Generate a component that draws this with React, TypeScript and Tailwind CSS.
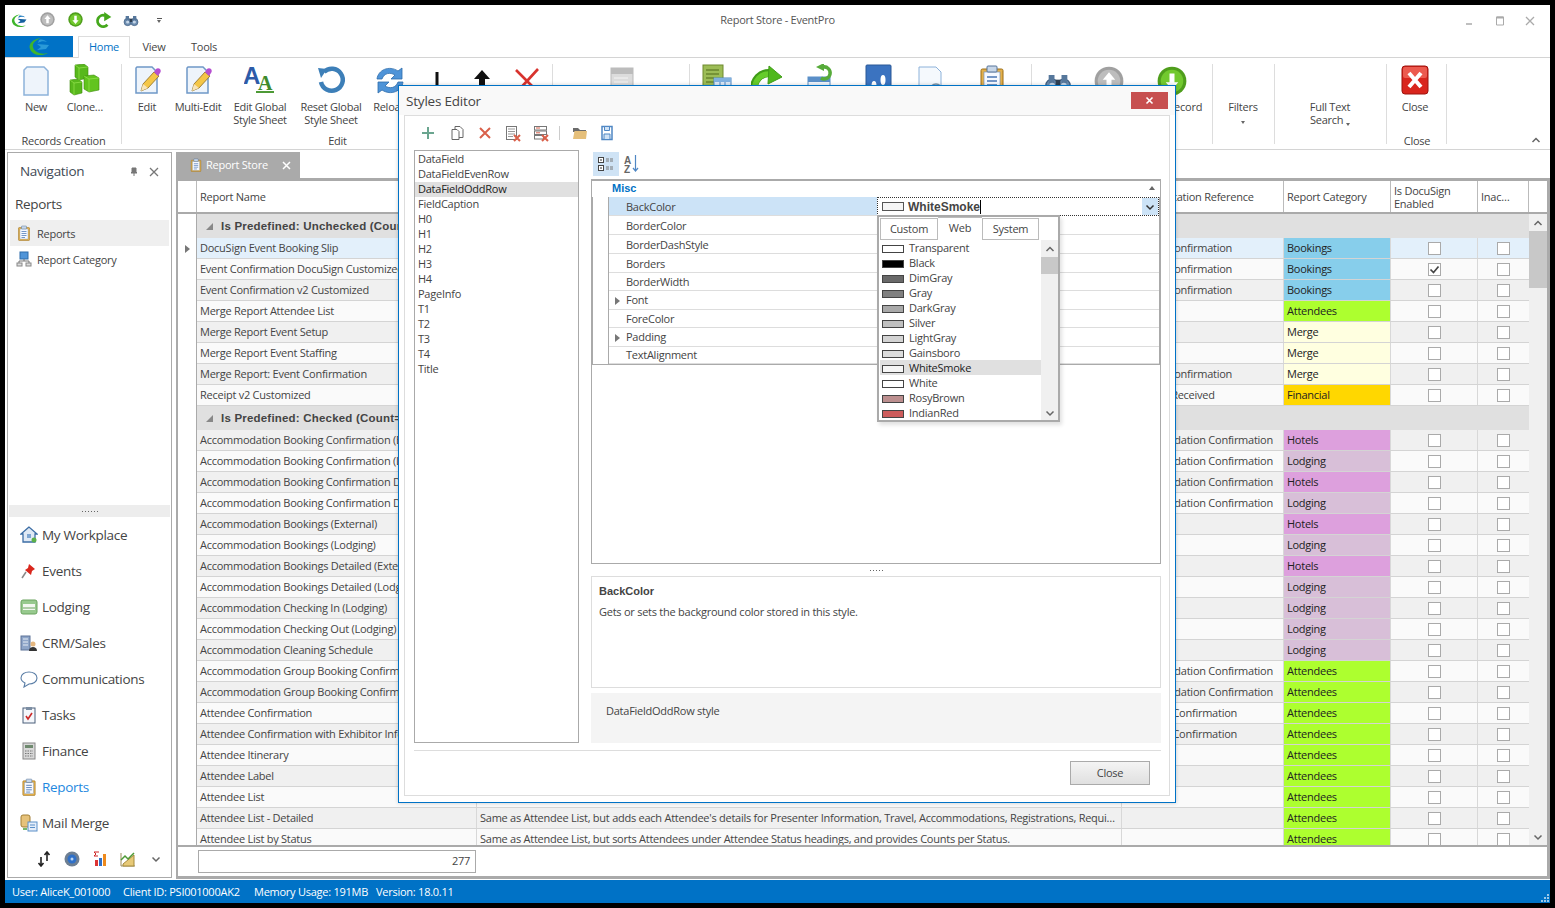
import React from "react";

type SvgP = { s?: number; className?: string };
const V = ({ s = 32, vb = 32, children }: { s?: number; vb?: number; children: React.ReactNode }) => (
  <svg width={s} height={s} viewBox={`0 0 ${vb} ${vb}`} className="block shrink-0">{children}</svg>
);

const Swirl = ({ s = 18, light = false }: SvgP & { light?: boolean }) => (
  <V s={s} vb={24}>
    <path d="M14 3C6 4 1 9 3 14c2 6 11 8 18 4-7 2-14-1-15-6-1-4 3-7 8-9z" fill="#3fb52c" />
    <path d="M10 9l12 1-3 4-9 1 4-3z" fill={light ? "#2a9ad8" : "#14609f"} />
    <path d="M12 5c3-1 6 0 8 2-3-1-6-1-9 1z" fill={light ? "#2a9ad8" : "#1f7cc0"} />
  </V>
);
const CircleArrow = ({ s = 18, up = false, green = false }: SvgP & { up?: boolean; green?: boolean }) => (
  <V s={s} vb={24}>
    <circle cx="12" cy="12" r="11.500" fill={green ? "#4f9e1c" : "#a0a0a0"} />
    <circle cx="12" cy="12" r="9" fill={green ? "#72c92e" : "#bdbdbd"} />
    <path d={up ? "M12 5l5 6h-3v7h-4v-7H7z" : "M12 19l5-6h-3V6h-4v7H7z"} fill="#fff" />
  </V>
);
const TitleRefresh = ({ s = 18 }: SvgP) => (
  <V s={s} vb={24}>
    <path d="M17.500 18A8 8 0 1 1 14 5" fill="none" stroke="#45a81c" strokeWidth="4" />
    <path d="M13 0l10 7-10 6z" fill="#45a81c" />
  </V>
);
const GreenTurn = () => (
  <V>
    <path d="M2 30C2 15 10 8 20 9" fill="none" stroke="#3f9c17" strokeWidth="8" />
    <path d="M3 30C3 15 10 9 20 10" fill="none" stroke="#66cc2a" strokeWidth="5.500" />
    <path d="M18 2l13 11-14 7z" fill="#4fb81c" stroke="#3f9c17" />
  </V>
);
const Binoculars = ({ s = 18 }: SvgP) => (
  <V s={s} vb={24}>
    <circle cx="7" cy="15" r="5.500" fill="#6d8db0" stroke="#3e5c7e" />
    <circle cx="17" cy="15" r="5.500" fill="#6d8db0" stroke="#3e5c7e" />
    <rect x="4" y="6" width="5" height="7" fill="#56779b" />
    <rect x="15" y="6" width="5" height="7" fill="#56779b" />
    <rect x="10" y="10" width="4" height="5" fill="#2f3f52" />
    <circle cx="7" cy="15" r="2.400" fill="#c5d6e8" />
    <circle cx="17" cy="15" r="2.400" fill="#c5d6e8" />
  </V>
);
const PageIcon = () => (
  <V>
    <path d="M7 3h17l4 4v24H4V6z" fill="#eef4fb" stroke="#8db2da" strokeWidth="1.500" />
  </V>
);
const Cubes = () => (
  <V>
    <path d="M6 1l9-1 4 3v11l-9 2-4-3z" fill="#58b81c" stroke="#3d8a0c" strokeWidth=".6" />
    <path d="M1 16l8-1 4 3v11l-8 2-4-3z" fill="#58b81c" stroke="#3d8a0c" strokeWidth=".6" />
    <path d="M15 12l10-1 5 3v12l-10 2-5-3z" fill="#62c41f" stroke="#3d8a0c" strokeWidth=".6" />
    <path d="M15 12l5 3 10-1M20 15v13M1 16l4 3 8-1M5 19v12M6 1l4 3 9-1M10 4v12" fill="none" stroke="#8fe04a" strokeWidth=".8" />
  </V>
);
const EditDoc = () => (
  <V>
    <path d="M6 3h15l5 5v21H5V4z" fill="#eef4fb" stroke="#6f98c8" strokeWidth="1.500" />
    <path d="M10 27l2-7L23 8l5 4-11 12z" fill="#f4c647" stroke="#8a6a20" strokeWidth=".8" />
    <path d="M23 8l2-3c1-1 3-1 4 0s1 3 0 4l-2 3z" fill="#b64fd0" />
    <path d="M10 27l2-7 5 4z" fill="#f7e4b8" />
  </V>
);
const AaIcon = () => (
  <svg width="32" height="32" viewBox="0 0 32 32" className="block">
    <text x="-1" y="20" fontFamily="'Liberation Sans', sans-serif" fontSize="24" fontWeight="700" fill="#2d5ba8">A</text>
    <text x="14" y="26" fontFamily="'Liberation Serif', serif" fontSize="20" fontWeight="700" fill="#3e8a2c">A</text>
    <rect x="12" y="27" width="18" height="2" fill="#4d9a36" />
  </svg>
);
const ResetIcon = () => (
  <V>
    <path d="M9 8a11 11 0 1 1-3 10" fill="none" stroke="#3d7fb8" strokeWidth="4.500" />
    <path d="M3 4l9 1-6 9z" fill="#3d7fb8" />
  </V>
);
const ReloadIcon = () => (
  <V>
    <path d="M3 15C4 6 15 1 24 7l4-3v11H17l4-4c-5-3-11-2-13 4z" fill="#4f94d8" stroke="#2d6cab" strokeWidth=".8" />
    <path d="M29 18c-1 9-12 14-21 8l-4 3V18h11l-4 4c5 3 11 2 13-4z" fill="#4f94d8" stroke="#2d6cab" strokeWidth=".8" />
  </V>
);
const BlackDown = () => (
  <V>
    <path d="M16 8v16" stroke="#111" strokeWidth="3" />
    <path d="M8 24h16v3H8z" fill="#111" />
  </V>
);
const BlackUp = () => (
  <V>
    <path d="M16 6l8 9h-5v13h-6V15H8z" fill="#111" />
  </V>
);
const RedX = () => (
  <V>
    <path d="M5 6l22 22M27 5L6 28" stroke="#d8332e" strokeWidth="2.600" />
  </V>
);
const GrayDoc = () => (
  <V>
    <rect x="5" y="4" width="22" height="24" fill="#dcdcdc" stroke="#bbb" />
    <rect x="5" y="4" width="22" height="6" fill="#bcbcbc" />
    <path d="M8 14h14M8 18h14M8 22h10" stroke="#f5f5f5" />
  </V>
);
const GreenSheet = () => (
  <V>
    <rect x="3" y="1" width="20" height="26" fill="#9cbc56" stroke="#6e8a2e" />
    <path d="M6 6h13M6 10h13M6 14h8M6 18h8" stroke="#4e6a18" />
    <rect x="14" y="14" width="17" height="16" fill="#dce9f7" stroke="#4f87c4" />
    <rect x="14" y="14" width="17" height="4" fill="#7fb0e0" />
    <path d="M20 18v12M25 18v12M14 24h17" stroke="#4f87c4" />
  </V>
);
const BlueWin = () => (
  <V>
    <rect x="2" y="13" width="22" height="18" fill="#eef4fb" stroke="#5a8fc8" />
    <rect x="2" y="13" width="22" height="5" fill="#5a8fc8" />
    <path d="M15 14a6 6 0 1 0 2-11" fill="none" stroke="#57ab3a" strokeWidth="3.500" />
    <path d="M10 3l8-4v8z" fill="#57ab3a" />
  </V>
);
const BlueBook = () => (
  <V>
    <rect x="4" y="1" width="25" height="30" rx="1" fill="#3b73c0" stroke="#2b5896" />
    <ellipse cx="12" cy="22" rx="2.500" ry="5" fill="#fff" />
    <ellipse cx="21" cy="16" rx="2.500" ry="5" fill="#fff" />
  </V>
);
const MagDoc = () => (
  <V>
    <path d="M5 3h17l5 5v22H5z" fill="#f5f9fd" stroke="#8db2da" />
    <circle cx="22" cy="26" r="6" fill="#e9f1f7" stroke="#7a93a8" strokeWidth="1.500" />
  </V>
);
const ClipBoard = ({ s = 32 }: SvgP) => (
  <V s={s}>
    <rect x="5" y="5" width="22" height="26" rx="1.500" fill="#e3b04b" stroke="#9b6c17" />
    <rect x="8" y="8" width="16" height="20" fill="#f6f9ff" stroke="#7a93b8" strokeWidth=".7" />
    <rect x="11" y="2" width="10" height="6" rx="1" fill="#c7d6e8" stroke="#56749a" />
    <path d="M11 13h10M11 17h10M11 21h10M11 25h7" stroke="#4976b4" strokeWidth="1.500" />
  </V>
);
const BigX = () => (
  <V>
    <rect x="3" y="2" width="26" height="28" rx="3" fill="#d9251d" stroke="#9c140e" />
    <rect x="4" y="3" width="24" height="11" rx="2" fill="#ec5a4f" />
    <path d="M10 9l12 14M22 9L10 23" stroke="#fff" strokeWidth="4" />
  </V>
);
const Plus = () => <V s={16} vb={16}><path d="M8 2v12M2 8h12" stroke="#6aa58f" strokeWidth="2" /></V>;
const CopyIc = () => (
  <V s={16} vb={16}>
    <path d="M6 1.500h5l3 3v8H6z" fill="#fff" stroke="#666" />
    <path d="M3 4.500h5l2 2v8H3z" fill="#fff" stroke="#666" />
  </V>
);
const XIc = () => <V s={16} vb={16}><path d="M3 3l10 10M13 3L3 13" stroke="#d9604a" strokeWidth="2" /></V>;
const ListX = () => (
  <V s={17} vb={17}>
    <rect x="1.500" y="1.500" width="10" height="13" fill="#fff" stroke="#777" />
    <path d="M3 4h7M3 6.500h7M3 9h7M3 11.500h5" stroke="#999" />
    <path d="M9 10l6 6M15 10l-6 6" stroke="#d9604a" strokeWidth="2" />
  </V>
);
const RowX = () => (
  <V s={17} vb={17}>
    <rect x="1.500" y="1.500" width="12" height="3.500" fill="#fff" stroke="#777" />
    <rect x="1.500" y="6" width="12" height="3.500" fill="#fff" stroke="#777" />
    <rect x="1.500" y="10.500" width="9" height="3.500" fill="#fff" stroke="#777" />
    <path d="M3 3h4M3 7.800h4" stroke="#d9604a" />
    <path d="M9 10l6 6M15 10l-6 6" stroke="#d9604a" strokeWidth="2" />
  </V>
);
const Folder = () => (
  <V s={16} vb={16}>
    <path d="M1 3h5l2 2h6v2H1z" fill="#6b6b6b" />
    <path d="M1 14l1.500-8H15l-1 8z" fill="#e5bf7a" />
  </V>
);
const SaveIc = () => (
  <V s={16} vb={16}>
    <path d="M3 1.500h10v13H3z" fill="#fff" stroke="#4f87c4" strokeWidth="1.500" />
    <path d="M5.500 1.500h5v4h-5zM5 9h6v5.500H5z" fill="#cfe2f5" stroke="#4f87c4" />
  </V>
);
const ChevUp = ({ c = "#666" }: { c?: string }) => (
  <V s={10} vb={10}><path d="M1.500 7L5 3.500 8.500 7" fill="none" stroke={c} strokeWidth="1.500" /></V>
);
const ChevDown = ({ c = "#666" }: { c?: string }) => (
  <V s={10} vb={10}><path d="M1.500 3.500L5 7l3.500-3.500" fill="none" stroke={c} strokeWidth="1.500" /></V>
);
const Tri = () => <span className="block w-0 h-0 border-y-[4px] border-y-transparent border-l-[5px] border-l-[#777]" />;
const Drop = () => <span className="inline-block w-0 h-0 border-x-[2.5px] border-x-transparent border-t-[3px] border-t-[#666]" />;

const Btn = ({ w, label, icon }: { w: string; label?: React.ReactNode; icon?: React.ReactNode }) => (
  <div className={`${w} flex flex-col items-center shrink-0`}>
    <div className="h-[38px] flex items-end justify-center">{icon}</div>
    <div className="mt-[4px] text-center leading-[13px] whitespace-nowrap">{label}</div>
  </div>
);

const Group = ({ w, label, children }: { w: string; label?: string; children: React.ReactNode }) => (
  <div className={`${w} relative shrink-0 flex flex-col`}>
    <div className="flex flex-1">{children}</div>
    <div className="h-[20px] pt-[3px] text-center leading-[18px]">{label}</div>
    <div className="absolute right-0 top-[6px] bottom-[5px] w-px bg-[#ddd]" />
  </div>
);

const Ribbon = () => (
  <div className="h-[92px] flex items-stretch border-b border-[#d4d4d4] text-[#444] relative shrink-0">
    <Group w="w-[117px]" label="Records Creation">
      <div className="w-[3px]" />
      <Btn w="w-[56px]" icon={<PageIcon />} label="New" />
      <Btn w="w-[42px]" icon={<Cubes />} label="Clone…" />
    </Group>
    <Group w="w-[431px]" label="Edit">
      <Btn w="w-[50px]" icon={<EditDoc />} label="Edit" />
      <Btn w="w-[52px]" icon={<EditDoc />} label="Multi-Edit" />
      <Btn w="w-[72px]" icon={<AaIcon />} label={<>Edit Global<br />Style Sheet</>} />
      <Btn w="w-[70px]" icon={<ResetIcon />} label={<>Reset Global<br />Style Sheet</>} />
      <Btn w="w-[48px]" icon={<ReloadIcon />} label="Reload" />
      <Btn w="w-[46px]" icon={<BlackDown />} />
      <Btn w="w-[44px]" icon={<BlackUp />} />
      <Btn w="w-[46px]" icon={<RedX />} />
    </Group>
    <Group w="w-[137px]">
      <Btn w="w-[137px]" icon={<GrayDoc />} />
    </Group>
    <Group w="w-[342px]">
      <Btn w="w-[52px]" icon={<GreenSheet />} />
      <Btn w="w-[50px]" icon={<GreenTurn />} />
      <Btn w="w-[60px]" icon={<BlueWin />} />
      <Btn w="w-[52px]" icon={<BlueBook />} />
      <Btn w="w-[52px]" icon={<MagDoc />} />
      <Btn w="w-[72px]" icon={<ClipBoard />} />
    </Group>
    <Group w="w-[181px]">
      <Btn w="w-[52px]" icon={<Binoculars s={28} />} />
      <Btn w="w-[50px]" icon={<CircleArrow s={30} up />} />
      <Btn w="w-[76px]" icon={<CircleArrow s={30} green />} label="Next Record" />
    </Group>
    <Group w="w-[62px]">
      <Btn w="w-[60px]" label={<>Filters<br /><Drop /></>} />
    </Group>
    <Group w="w-[112px]">
      <Btn w="w-[110px]" label={<>Full Text<br />Search <span className="align-middle"><Drop /></span></>} />
    </Group>
    <Group w="w-[60px]" label="Close">
      <Btn w="w-[56px]" icon={<BigX />} label="Close" />
    </Group>
    <div className="flex-1 flex items-end justify-end pr-[9px] pb-[4px]"><ChevUp /></div>
  </div>
);

const cats: Record<string, string> = {
  Bookings: "bg-[#87ceeb]",
  Attendees: "bg-[#adff2f]",
  Merge: "bg-[#ffffe0]",
  Financial: "bg-[#ffd700]",
  Hotels: "bg-[#dda0dd]",
  Lodging: "bg-[#d8bfd8]",
};
const EC = "Booking Confirmation";
const AC = "Accommodation Confirmation";
const AT = "Attendee Confirmation";
type R = { n: string; d?: string; r?: string; c: string; chk?: boolean; sel?: boolean };
const groupA: R[] = [
  { n: "DocuSign Event Booking Slip", r: EC, c: "Bookings", sel: true },
  { n: "Event Confirmation DocuSign Customized", r: EC, c: "Bookings", chk: true },
  { n: "Event Confirmation v2 Customized", r: EC, c: "Bookings" },
  { n: "Merge Report Attendee List", c: "Attendees" },
  { n: "Merge Report Event Setup", c: "Merge" },
  { n: "Merge Report Event Staffing", c: "Merge" },
  { n: "Merge Report: Event Confirmation", r: EC, c: "Merge" },
  { n: "Receipt v2 Customized", r: "Payment Received", c: "Financial" },
];
const groupB: R[] = [
  { n: "Accommodation Booking Confirmation (External)", r: AC, c: "Hotels" },
  { n: "Accommodation Booking Confirmation (Lodging)", r: AC, c: "Lodging" },
  { n: "Accommodation Booking Confirmation Detailed (External)", r: AC, c: "Hotels" },
  { n: "Accommodation Booking Confirmation Detailed (Lodging)", r: AC, c: "Lodging" },
  { n: "Accommodation Bookings (External)", c: "Hotels" },
  { n: "Accommodation Bookings (Lodging)", c: "Lodging" },
  { n: "Accommodation Bookings Detailed (External)", c: "Hotels" },
  { n: "Accommodation Bookings Detailed (Lodging)", c: "Lodging" },
  { n: "Accommodation Checking In (Lodging)", c: "Lodging" },
  { n: "Accommodation Checking Out (Lodging)", c: "Lodging" },
  { n: "Accommodation Cleaning Schedule", c: "Lodging" },
  { n: "Accommodation Group Booking Confirmation (External)", r: AC, c: "Attendees" },
  { n: "Accommodation Group Booking Confirmation (Lodging)", r: AC, c: "Attendees" },
  { n: "Attendee Confirmation", r: AT, c: "Attendees" },
  { n: "Attendee Confirmation with Exhibitor Information", r: AT, c: "Attendees" },
  { n: "Attendee Itinerary", c: "Attendees" },
  { n: "Attendee Label", c: "Attendees" },
  { n: "Attendee List", c: "Attendees" },
  { n: "Attendee List - Detailed", c: "Attendees", d: "Same as Attendee List, but adds each Attendee's details for Presenter Information, Travel, Accommodations, Registrations, Requi…" },
  { n: "Attendee List by Status", c: "Attendees", d: "Same as Attendee List, but sorts Attendees under Attendee Status headings, and provides Counts per Status." },
];

const Check = ({ on = false }: { on?: boolean }) => (
  <span className="w-[13px] h-[13px] border border-[#aaa] bg-white flex items-center justify-center">
    {on && <V s={11} vb={11}><path d="M1.500 5.500l3 3 5-6" fill="none" stroke="#444" strokeWidth="1.700" /></V>}
  </span>
);

const Cell = ({ w, children, className = "" }: { w: string; children?: React.ReactNode; className?: string }) => (
  <div className={`${w} shrink-0 h-full border-r border-[#d8d8d8] pl-[3px] pr-[2px] flex items-center overflow-hidden whitespace-nowrap ${className}`}>{children}</div>
);

const Row = ({ r, i }: { r: R; i: number }) => {
  const bg = r.sel ? "bg-[#e3f0fb]" : i % 2 === 1 ? "bg-[#fafafa]" : "bg-[#f0f0f0]";
  return (
    <div className="h-[21px] shrink-0 flex">
      <div className="w-[19px] shrink-0 bg-white border-r border-[#aaa] flex items-center justify-center">{r.sel && <Tri />}</div>
      <div className={`flex flex-1 border-b border-[#d4d4d4] ${bg}`}>
        <Cell w="w-[280px]">{r.n}</Cell>
        <Cell w="w-[645px]">{r.d}</Cell>
        <Cell w="w-[162px]">{r.r}</Cell>
        <Cell w="w-[107px]" className={`text-[#222] ${cats[r.c]}`}>{r.c}</Cell>
        <Cell w="w-[87px]" className="justify-center"><Check on={r.chk} /></Cell>
        <Cell w="w-[51px]" className="justify-center !border-r-0 !pr-[4px]"><Check /></Cell>
      </div>
    </div>
  );
};

const GroupRow = ({ t }: { t: string }) => (
  <div className="h-[24px] shrink-0 flex">
    <div className="w-[19px] shrink-0 bg-white border-r border-[#aaa]" />
    <div className="flex-1 bg-[#e0e0e0] flex items-center pl-[9px] pt-px font-bold text-[#444] font-['Liberation_Sans','Noto_Sans',sans-serif] text-[11.5px] tracking-[0.2px] overflow-hidden whitespace-nowrap">
      <span className="w-0 h-0 mr-[8px] border-t-[7px] border-t-transparent border-r-[7px] border-r-[#888]" />
      {t}
    </div>
  </div>
);

const Grid = () => {
  const h = "h-full border-r border-[#bbb] px-[3px] flex items-center shrink-0 leading-[13px]";
  return (
    <div className="flex-1 min-h-0 flex flex-col overflow-hidden">
      <div className="h-[33px] shrink-0 flex border-b-2 border-[#aaa] bg-white">
        <div className={`${h} w-[19px]`} />
        <div className={`${h} w-[280px]`}>Report Name</div>
        <div className={`${h} w-[645px]`}>Description</div>
        <div className={`${h} w-[162px]`}>Documentation Reference</div>
        <div className={`${h} w-[107px]`}>Report Category</div>
        <div className={`${h} w-[87px]`}>Is DocuSign<br />Enabled</div>
        <div className={`${h} w-[51px]`}>Inac…</div>
      </div>
      <div className="flex-1 min-h-0 flex">
        <div className="flex-1 min-w-0 flex flex-col overflow-hidden">
          <GroupRow t="Is Predefined: Unchecked (Count=8)" />
          {groupA.map((r, i) => <Row key={r.n} r={r} i={i} />)}
          <GroupRow t="Is Predefined: Checked (Count=269)" />
          {groupB.map((r, i) => <Row key={r.n} r={r} i={i} />)}
        </div>
        <div className="w-[18px] shrink-0 bg-[#f0f0f0] flex flex-col items-center">
          <div className="h-[17px] flex items-center"><ChevUp /></div>
          <div className="w-full h-[57px] bg-[#c8c8c8]" />
          <div className="flex-1" />
          <div className="h-[17px] flex items-center"><ChevDown /></div>
        </div>
      </div>
    </div>
  );
};

const navItems: [string, React.ReactNode, boolean?][] = [
  ["My Workplace", <V s={18} vb={18}><path d="M9 1L1 8h2v8h12V8h2z" fill="#dfe9f5" stroke="#3d6ea5" strokeWidth="1.300" /><rect x="7" y="8" width="4" height="4" fill="#7fa6d2" /><circle cx="14" cy="14" r="2.500" fill="#5bb04a" /></V>],
  ["Events", <V s={18} vb={18}><path d="M9 2l6 5-3 2-1 4-6-5 3-2z" fill="#d9271d" /><path d="M6 10l-4 6" stroke="#888" strokeWidth="1.500" /></V>],
  ["Lodging", <V s={18} vb={18}><rect x="1" y="2" width="16" height="14" rx="2" fill="#97c98e" stroke="#6aa35f" /><rect x="3" y="6" width="12" height="6" fill="#f2f7f0" /><path d="M3 10h12" stroke="#6aa35f" /></V>],
  ["CRM/Sales", <V s={18} vb={18}><rect x="1" y="2" width="9" height="14" fill="#8ea5c8" stroke="#5c7398" /><path d="M3 5h5M3 8h5M3 11h5" stroke="#e5ecf5" /><circle cx="13" cy="10" r="2.500" fill="#e5b77f" /><path d="M9 17c0-3 2-4 4-4s4 1 4 4z" fill="#333" /></V>],
  ["Communications", <V s={18} vb={18}><path d="M9 2c4 0 8 2 8 6s-4 6-8 6l-5 3 1-4c-2-1-4-3-4-5 0-4 4-6 8-6z" fill="#fff" stroke="#5b7ea6" strokeWidth="1.100" /></V>],
  ["Tasks", <V s={18} vb={18}><rect x="3" y="2" width="12" height="15" fill="#f4f7fb" stroke="#4a5f7a" /><rect x="6" y="1" width="6" height="3" fill="#7c8ea3" /><path d="M6 10l2 3 4-6" fill="none" stroke="#cc2a2a" strokeWidth="1.600" /></V>],
  ["Finance", <V s={18} vb={18}><rect x="3" y="1" width="12" height="16" fill="#d8d8d8" stroke="#888" /><rect x="5" y="3" width="8" height="3" fill="#6f8a6f" /><path d="M5 9h8M5 11.500h8M5 14h8" stroke="#777" strokeDasharray="1.500 1" /></V>],
  ["Reports", <ClipBoard s={18} />, true],
  ["Mail Merge", <V s={18} vb={18}><rect x="1" y="1" width="9" height="12" rx="2" fill="#e6c27a" stroke="#a37f35" /><rect x="8" y="8" width="9" height="9" fill="#e5eefa" stroke="#5a8fc8" /><path d="M10 11h5M10 13.500h5" stroke="#5a8fc8" /><path d="M3 15h4" stroke="#49a038" strokeWidth="1.500" /></V>],
];

const Nav = () => (
  <div className="w-[165px] shrink-0 border border-[#aaa] flex flex-col text-[#444]">
    <div className="h-[35px] shrink-0 flex items-center pl-[12px] pr-[12px] pt-[2px] text-[13.5px] tracking-[-0.3px] text-[#3f4a55]">
      <span className="flex-1">Navigation</span>
      <V s={10} vb={10}><path d="M3 1h4v4l1 1H2l1-1zM5 6v3" fill="#777" stroke="#777" /></V>
      <span className="w-[10px]" />
      <V s={10} vb={10}><path d="M1 1l8 8M9 1L1 9" stroke="#777" strokeWidth="1.300" /></V>
    </div>
    <div className="h-[32px] shrink-0 pl-[7px] flex items-center text-[13.5px] tracking-[-0.3px]">Reports</div>
    <div className="h-[26px] mx-[2px] shrink-0 bg-[#efefef] flex items-center pl-[6px] gap-[5px]">
      <ClipBoard s={16} /> <span className="pt-[2px]">Reports</span>
    </div>
    <div className="h-[26px] mx-[2px] shrink-0 flex items-center pl-[6px] gap-[5px]">
      <V s={16} vb={16}><rect x="4" y="1" width="8" height="7" fill="#4f94d8" stroke="#2d6cab" /><path d="M8 8v2M3 10h10v2M3 10v2" stroke="#777" fill="none" /><rect x="1" y="12" width="5" height="3" fill="#ddd" stroke="#888" /><rect x="10" y="12" width="5" height="3" fill="#ddd" stroke="#888" /></V>
      <span className="pt-[2px]">Report Category</span>
    </div>
    <div className="flex-1" />
    <div className="h-[12px] mx-[1px] shrink-0 bg-[#ededed] flex items-center justify-center gap-[2px]">
      {[0, 1, 2, 3, 4, 5].map((i) => <span key={i} className="w-px h-px bg-[#666] block" />)}
    </div>
    {navItems.map(([t, ic, active]) => (
      <div key={t} className={`h-[36px] shrink-0 flex items-center pl-[11px] gap-[4px] text-[13.5px] tracking-[-0.3px] ${active ? "text-[#1e88e0]" : "text-[#444]"}`}>
        <span className="w-[19px] flex justify-center">{ic}</span>
        <span>{t}</span>
      </div>
    ))}
    <div className="h-[36px] shrink-0 flex items-center pl-[22px]">
      <span className="w-[28px] flex justify-center">
        <V s={16} vb={16}><path d="M5 15V6M2.500 12L5 15l2.500-3M11 1v9M8.500 4L11 1l2.500 3" stroke="#222" strokeWidth="1.600" fill="none" /></V>
      </span>
      <span className="w-[28px] flex justify-center">
        <V s={16} vb={16}><circle cx="8" cy="8" r="7.500" fill="#6e7f92" /><circle cx="8" cy="8" r="4.500" fill="#2f70c8" /><circle cx="8" cy="8" r="1.500" fill="#b9d4f2" /></V>
      </span>
      <span className="w-[28px] flex justify-center">
        <V s={16} vb={16}><rect x="3" y="9" width="3" height="6" fill="#d33" /><rect x="7" y="7" width="3" height="8" fill="#2f70c8" /><rect x="11" y="3" width="3" height="12" fill="#ee8a1d" /><path d="M7 1H2l2 2-2 2h4" stroke="#c22" fill="none" /></V>
      </span>
      <span className="w-[28px] flex justify-center">
        <V s={16} vb={16}><path d="M1 15V2M1 15h14" stroke="#9a8a5a" /><path d="M3 13L14 4v11H3z" fill="#e7c977" stroke="#a58a3c" /><path d="M1 9l4-4 3 3 6-6" stroke="#4d9a36" strokeWidth="1.500" fill="none" /></V>
      </span>
      <span className="w-[27px] flex justify-center"><ChevDown /></span>
    </div>
  </div>
);

const styleNames = ["DataField", "DataFieldEvenRow", "DataFieldOddRow", "FieldCaption", "H0", "H1", "H2", "H3", "H4", "PageInfo", "T1", "T2", "T3", "T4", "Title"];

const props: [string, string, boolean?][] = [
  ["BackColor", "h-[19px]"],
  ["BorderColor", "h-[19px]"],
  ["BorderDashStyle", "h-[19px]"],
  ["Borders", "h-[19px]"],
  ["BorderWidth", "h-[18px]"],
  ["Font", "h-[19px]", true],
  ["ForeColor", "h-[18px]"],
  ["Padding", "h-[19px]", true],
  ["TextAlignment", "h-[17px]"],
];

const PropGrid = () => (
  <div className="h-[385px] shrink-0 border border-t-2 border-[#aaa] flex flex-col bg-white">
    <div className="h-[16px] shrink-0 flex items-center pl-[20px] pr-[5px] pb-[2px] justify-between font-bold text-[#0072c6] font-['Liberation_Sans',sans-serif] tracking-normal">
      <span>Misc</span>
      <span className="w-0 h-0 border-x-[3.5px] border-x-transparent border-b-[4px] border-b-[#666]" />
    </div>
    <div className="flex flex-col border-b border-x border-[#aaa]">
      {props.map(([n, h, exp], i) => (
        <div key={n} className={`${h} shrink-0 flex ml-[15px] border-l border-[#aaa]`}>
          <div className={`w-[268px] shrink-0 flex items-center border-b border-[#ddd] pl-[17px] relative ${i < 5 || i === 6 ? "pt-[2px]" : ""} ${i === 0 ? "bg-[#cce3f7]" : ""}`}>
            {exp && <span className="absolute left-[6px] top-[6px]"><Tri /></span>}
            {n}
          </div>
          {i === 0 ? (
            <div className="flex-1 border border-dotted border-[#333] flex items-center pl-[4px] relative">
              <span className="w-[22px] h-[9px] border border-[#555] bg-[#f5f5f5] mr-[4px]" />
              <span className="font-bold font-['Liberation_Sans',sans-serif] text-[12px] tracking-normal">WhiteSmoke</span>
              <span className="w-px h-[14px] bg-black" />
              <span className="absolute right-0 top-0 bottom-0 w-[16px] bg-[#cce3f7] flex items-center justify-center"><ChevDown c="#333" /></span>
            </div>
          ) : (
            <div className="flex-1 border-b border-l border-[#ddd]" />
          )}
        </div>
      ))}
    </div>
  </div>
);

const colors: [string, string][] = [
  ["Transparent", "bg-white"],
  ["Black", "bg-black"],
  ["DimGray", "bg-[#696969]"],
  ["Gray", "bg-[#808080]"],
  ["DarkGray", "bg-[#a9a9a9]"],
  ["Silver", "bg-[#c0c0c0]"],
  ["LightGray", "bg-[#d3d3d3]"],
  ["Gainsboro", "bg-[#dcdcdc]"],
  ["WhiteSmoke", "bg-[#f5f5f5]"],
  ["White", "bg-white"],
  ["RosyBrown", "bg-[#bc8f8f]"],
  ["IndianRed", "bg-[#cd5c5c]"],
];

const ColorDrop = () => (
  <div className="absolute left-[877px] top-[215px] w-[183px] h-[207px] bg-white border-2 border-[#aaa] shadow-[2px_3px_4px_rgba(0,0,0,0.12)] flex flex-col">
    <div className="h-[24px] shrink-0 flex items-start pl-[1px] relative">
      <div className="w-[58px] h-[22px] mt-[1px] pt-px border border-[#bbb] flex items-center justify-center">Custom</div>
      <div className="w-[44px] h-[24px] pb-[3px] flex items-center justify-center border-t border-[#bbb]">Web</div>
      <div className="w-[57px] h-[22px] mt-[1px] pt-px border border-[#bbb] flex items-center justify-center">System</div>
    </div>
    <div className="flex-1 flex min-h-0 -mt-px ml-[1px] relative">
      <div className="flex-1 flex flex-col">
        {colors.map(([n, c]) => (
          <div key={n} className={`h-[15px] shrink-0 flex items-center pl-[2px] pt-[2px] ${n === "WhiteSmoke" ? "bg-[#e0e0e0] text-[#222]" : ""}`}>
            <span className={`w-[22px] h-[8px] border border-[#444] mr-[5px] ${c}`} />
            {n}
          </div>
        ))}
      </div>
      <div className="w-[17px] bg-[#f0f0f0] flex flex-col items-center">
        <div className="h-[17px] flex items-center"><ChevUp /></div>
        <div className="w-full h-[17px] bg-[#c8c8c8]" />
        <div className="flex-1" />
        <div className="h-[15px] flex items-center"><ChevDown /></div>
      </div>
    </div>
  </div>
);

const Dialog = () => (
  <div className="absolute left-[398px] top-[85px] w-[778px] h-[718px] bg-white border border-[#0072c6] flex flex-col shadow-[0_0_4px_rgba(0,0,0,0.2)]">
    <div className="h-[29px] shrink-0 bg-[#f9f9f9] flex items-center pl-[7px] pr-[7px] justify-between text-[13.5px] tracking-[-0.2px] text-[#444]">
      <span className="pt-[2px]">Styles Editor</span>
      <span className="w-[37px] h-[17px] bg-[#c75050] flex items-center justify-center">
        <V s={9} vb={9}><path d="M1.500 1.500l6 6M7.500 1.500l-6 6" stroke="#fff" strokeWidth="1.600" /></V>
      </span>
    </div>
    <div className="flex-1 mx-[5px] mb-[6px] border border-[#ddd] flex flex-col min-h-0">
      <div className="h-[34px] shrink-0 flex items-center pl-[15px]">
        <span className="w-[29px]"><Plus /></span>
        <span className="w-[28px]"><CopyIc /></span>
        <span className="w-[28px]"><XIc /></span>
        <span className="w-[28px]"><ListX /></span>
        <span className="w-[26px]"><RowX /></span>
        <span className="w-px h-[14px] bg-[#ccc] mr-[12px]" />
        <span className="w-[27px]"><Folder /></span>
        <span className="w-[16px]"><SaveIc /></span>
      </div>
      <div className="flex pl-[9px] pr-[8px] gap-[12px]">
        <div className="w-[165px] h-[593px] border border-[#aaa] pt-px">
          {styleNames.map((n) => (
            <div key={n} className={`h-[15px] flex items-center pl-[3px] ${n === "DataFieldOddRow" ? "bg-[#e0e0e0] text-[#222]" : ""}`}>{n}</div>
          ))}
        </div>
        <div className="flex-1 flex flex-col">
          <div className="h-[29px] shrink-0 flex items-start pl-[2px] pt-[2px] gap-[5px]">
            <span className="w-[26px] h-[24px] bg-[#cfe3f5] flex items-center justify-center">
              <V s={20} vb={20}>
                <rect x="2.500" y="3.500" width="5" height="5" fill="#fff" stroke="#444" />
                <rect x="2.500" y="11.500" width="5" height="5" fill="#fff" stroke="#444" />
                <path d="M4 6h2M5 5v2M4 14h2M5 13v2M10 5h3M14 5h3M10 7h3M14 7h3M10 13h3M14 13h3M10 15h3M14 15h3" stroke="#777" />
              </V>
            </span>
            <span className="relative w-[16px] h-[24px] leading-[9px] text-[10px] font-bold tracking-normal text-[#666] pt-[4px] font-['Liberation_Sans',sans-serif]">
              A<br />Z
              <span className="absolute left-[8px] top-[3px]">
                <svg width="7" height="17" viewBox="0 0 7 17" className="block"><path d="M3.500 0v16M1 13l2.500 3L6 13" stroke="#4f87c4" strokeWidth="1.200" fill="none" /></svg>
              </span>
            </span>
          </div>
          <PropGrid />
          <div className="h-[12px] shrink-0 flex items-center justify-center gap-[2px]">
            {[0, 1, 2, 3, 4].map((i) => <span key={i} className="w-px h-px bg-[#666] block" />)}
          </div>
          <div className="h-[112px] shrink-0 border border-[#ddd] px-[7px]">
            <div className="font-bold mt-[6px] font-['Liberation_Sans',sans-serif] tracking-normal">BackColor</div>
            <div className="mt-[4px]">Gets or sets the background color stored in this style.</div>
          </div>
          <div className="h-[50px] mt-[5px] shrink-0 bg-[#f4f4f4] pl-[15px] pt-[10px]">DataFieldOddRow style</div>
        </div>
      </div>
      <div className="mx-[9px] mr-[8px] mt-[7px] border-t border-[#ddd] flex justify-end pt-[10px] pr-[11px]">
        <div className="w-[80px] h-[24px] border border-[#aaa] bg-[linear-gradient(#f4f4f4,#e0e0e0)] flex items-center justify-center">Close</div>
      </div>
    </div>
  </div>
);

export default function App() {
  return (
    <div className="relative w-[1555px] h-[908px] bg-black pt-[5px] pb-[5px] pl-[5px] pr-[5px] overflow-hidden font-['Open_Sans','Noto_Sans',sans-serif] text-[11px] tracking-[-0.25px] text-[#444]">
      <div className="w-full h-full bg-white flex flex-col">
        <div className="h-[31px] shrink-0 grid grid-cols-[1fr_auto_1fr] items-center">
          <div className="flex">
            <span className="w-[28px] flex justify-center"><Swirl s={18} /></span>
            <span className="w-[28px] flex justify-center"><CircleArrow s={15} up /></span>
            <span className="w-[28px] flex justify-center"><CircleArrow s={15} green /></span>
            <span className="w-[28px] flex justify-center"><TitleRefresh s={17} /></span>
            <span className="w-[28px] flex justify-center"><Binoculars s={16} /></span>
            <span className="w-[28px] flex justify-center items-center">
              <span className="flex flex-col items-center gap-[1px]"><span className="w-[5px] h-px bg-[#555]" /><Drop /></span>
            </span>
          </div>
          <div className="text-[#555]">Report Store - EventPro</div>
          <div className="flex justify-end pr-[5px]">
            <span className="w-[30px] flex justify-center"><V s={10} vb={10}><path d="M1 8h6" stroke="#aaa" strokeWidth="1.500" /></V></span>
            <span className="w-[30px] flex justify-center"><V s={10} vb={10}><path d="M1.500 1h7v8h-7z" fill="none" stroke="#aaa" /><path d="M1.500 1.500h7" stroke="#aaa" strokeWidth="2" /></V></span>
            <span className="w-[30px] flex justify-center"><V s={10} vb={10}><path d="M1 1l8 8M9 1L1 9" stroke="#aaa" strokeWidth="1.300" /></V></span>
          </div>
        </div>
        <div className="h-[22px] shrink-0 flex border-b border-[#d4d4d4] relative">
          <div className="w-[68px] bg-[#0072c6] flex items-center justify-center"><Swirl s={24} light /></div>
          <div className="w-[5px]" />
          <div className="w-[52px] h-[22px] bg-white border border-[#ddd] border-b-0 flex items-center justify-center text-[#0072c6]">Home</div>
          <div className="w-[48px] flex items-center justify-center pt-[2px]">View</div>
          <div className="w-[52px] flex items-center justify-center pt-[2px]">Tools</div>
        </div>
        <Ribbon />
        <div className="flex-1 min-h-0 flex pl-[2px] pt-[2px] gap-[4px] bg-white">
          <div className="flex pb-[2px]"><Nav /></div>
          <div className="flex-1 min-w-0 flex flex-col pb-px">
            <div className="h-[26px] shrink-0 flex">
              <div className="w-[124px] bg-[#aaa] flex items-center pl-[13px] text-white gap-[3px]">
                <ClipBoard s={14} />
                <span className="flex-1">Report Store</span>
                <span className="pr-[9px]"><V s={9} vb={9}><path d="M1 1l7 7M8 1L1 8" stroke="#fff" strokeWidth="1.500" /></V></span>
              </div>
            </div>
            <div className="flex-1 min-h-0 border-t-[3px] border-l-2 border-r-[3px] border-b-[3px] border-[#aaa] flex flex-col">
              <Grid />
              <div className="h-[31px] shrink-0 border-t-2 border-[#aaa] pl-[20px] pt-[3px] bg-white">
                <div className="w-[278px] h-[23px] border border-[#aaa] flex items-center justify-end pr-[5px]">277</div>
              </div>
            </div>
          </div>
        </div>
        <div className="h-[23px] shrink-0 bg-[#0072c6] text-white flex items-center pl-[7px] pt-[2px] relative whitespace-nowrap">
          <span className="w-[111px]">User: AliceK_001000</span>
          <span className="w-[131px]">Client ID: PSI001000AK2</span>
          <span className="w-[122px]">Memory Usage: 191MB</span>
          <span>Version: 18.0.11</span>
          <span className="absolute right-[1px] bottom-[1px] grid grid-cols-3 gap-px">
            {[0, 1, 2, 3, 4, 5, 6, 7, 8].map((i) => (
              <span key={i} className={`w-[2px] h-[2px] ${i === 0 || i === 1 || i === 3 ? "" : "bg-[#9cc8e8]"}`} />
            ))}
          </span>
        </div>
      </div>
      <Dialog />
      <ColorDrop />
    </div>
  );
}
